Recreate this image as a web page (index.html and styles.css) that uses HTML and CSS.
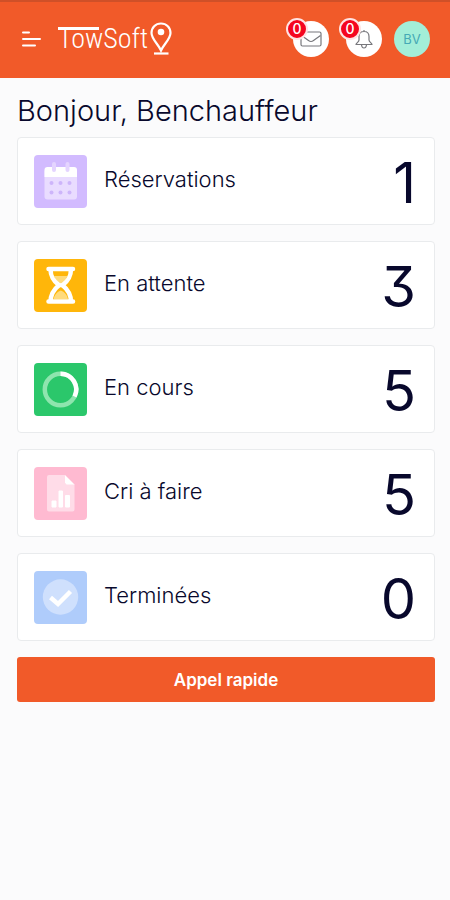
FILE: index.html
```html
<!DOCTYPE html>
<html lang="fr">
<head>
    <meta charset="UTF-8">
    <meta name="viewport" content="width=device-width, initial-scale=1.0">
    <title>TowSoft</title>
    <link rel="stylesheet" href="styles.css">
</head>
<body>
    <header class="header">
        <button class="menu-btn" type="button" aria-label="Menu">
            <svg width="20" height="16" viewBox="0 0 20 16" fill="none" stroke="#fff" stroke-width="2" stroke-linecap="round">
                <path d="M2 1.500H8M2 8H19M2 14.500H14"/>
            </svg>
        </button>
        <a class="logo" href="#">
            <span class="logo-text">TowSoft</span>
            <svg class="logo-pin" width="22" height="34" viewBox="0 0 22 34" fill="none" stroke="#fff" stroke-width="2.200">
                <path d="M11 28.500C8.500 22.500 1.500 17 1.500 11C1.500 5.500 5.500 1.500 11 1.500S20.500 5.500 20.500 11C20.500 17 13.500 22.500 11 28.500Z"/>
                <circle cx="11" cy="10" r="3.300" fill="#fff" stroke="none"/>
                <path d="M4 31.500H18.500"/>
            </svg>
        </a>
        <div class="actions">
            <button class="round-btn" type="button" aria-label="Messages">
                <svg width="22" height="16" viewBox="0 0 22 16" fill="none" stroke="#77777c" stroke-width="1.200" stroke-linejoin="round">
                    <rect x="1" y="1" width="20" height="14" rx="1.500"/>
                    <path d="M1.500 4.500L8.500 9.500Q11 11.500 13.500 9.500L20.500 4.500"/>
                </svg>
                <span class="badge">0</span>
            </button>
            <button class="round-btn" type="button" aria-label="Notifications">
                <svg width="18" height="20" viewBox="0 0 18 20" fill="none" stroke="#77777c" stroke-width="1.200" stroke-linejoin="round">
                    <path d="M9 1V2.500M4 11V7.500C4 4.500 6 2.500 9 2.500S14 4.500 14 7.500V11C14 13 17 14 17 15.500H1C1 14 4 13 4 11Z"/>
                    <path d="M6.500 16Q7 19 9 19T11.500 16"/>
                </svg>
                <span class="badge">0</span>
            </button>
        </div>
        <button class="avatar" type="button">BV</button>
    </header>

    <main class="content">
        <h1 class="greeting">Bonjour, Benchauffeur</h1>

        <div class="cards">
            <a class="card" href="#">
                <svg class="card-icon purple" viewBox="0 0 53 53">
                    <rect x="10.500" y="14" width="32.500" height="30.500" rx="3" fill="#e9dcff"/>
                    <path d="M10.500 22V15Q10.500 12 13.500 12H40Q43 12 43 15V22Z" fill="#fff"/>
                    <path d="M20 9V15M33.500 9V15" stroke="#e4d4ff" stroke-width="4" stroke-linecap="round"/>
                    <g fill="#cdb5fa">
                        <circle cx="17.500" cy="28" r="2"/>
                        <circle cx="26.500" cy="28" r="2"/>
                        <circle cx="35.500" cy="28" r="2"/>
                        <circle cx="17.500" cy="37.500" r="2"/>
                        <circle cx="26.500" cy="37.500" r="2"/>
                        <circle cx="35.500" cy="37.500" r="2"/>
                    </g>
                </svg>
                <span class="card-label">Réservations</span>
                <span class="card-value">1</span>
            </a>
            <a class="card" href="#">
                <svg class="card-icon yellow" viewBox="0 0 53 53">
                    <path d="M20 17H33.500Q31 23 26.800 25.500Q22 23 20 17Z" fill="#ffdb7c"/>
                    <path d="M19.500 40Q21 33.500 26.800 31.500Q32.500 33.500 34 40Z" fill="#ffdb7c"/>
                    <path d="M14.500 10H39M14.500 42.500H39" stroke="#fff" stroke-width="4.500" stroke-linecap="round"/>
                    <path d="M16.500 10C16.500 18 19.500 22 25 26.200C19.500 30.500 16.500 35 16.500 43M37 10C37 18 34 22 28.500 26.200C34 30.500 37 35 37 43" fill="none" stroke="#fff" stroke-width="4.500"/>
                    <path d="M24 26.200H29.500" stroke="#fff" stroke-width="4"/>
                </svg>
                <span class="card-label">En attente</span>
                <span class="card-value">3</span>
            </a>
            <a class="card" href="#">
                <svg class="card-icon green" viewBox="0 0 53 53" fill="none" stroke-width="4.500">
                    <circle cx="26.500" cy="26.500" r="15.700" stroke="#8ee5ae"/>
                    <path d="M26.500 10.800A15.700 15.700 0 0 1 40.500 33.600" stroke="#fff"/>
                </svg>
                <span class="card-label">En cours</span>
                <span class="card-value">5</span>
            </a>
            <a class="card" href="#">
                <svg class="card-icon pink" viewBox="0 0 53 53">
                    <path d="M15 8H31V17H40.500V42.500Q40.500 44.500 38.500 44.500H15Q13 44.500 13 42.500V10Q13 8 15 8Z" fill="#ffdce8"/>
                    <path d="M31 8L40.500 17.500H33Q31 17.500 31 15.500Z" fill="#fff"/>
                    <path d="M18 34H22V40H18ZM25 24H28.500V40H25ZM31.500 28.500H35.500V40H31.500Z" fill="#fff" stroke="#fff" stroke-linejoin="round"/>
                </svg>
                <span class="card-label">Cri à faire</span>
                <span class="card-value">5</span>
            </a>
            <a class="card" href="#">
                <svg class="card-icon blue" viewBox="0 0 53 53">
                    <circle cx="26.500" cy="26" r="17.700" fill="#cfe0fd"/>
                    <path d="M16.500 26.500L24 33L36.500 20.500" fill="none" stroke="#fff" stroke-width="4.500"/>
                </svg>
                <span class="card-label">Terminées</span>
                <span class="card-value">0</span>
            </a>
        </div>

        <button class="call-btn" type="button">Appel rapide</button>
    </main>
</body>
</html>
```
FILE: styles.css
```css
* {
    box-sizing: border-box;
}

body {
    margin: 0;
    background-color: #fbfbfc;
    font-family: Inter, Roboto, sans-serif;
    color: #08082c;
}

button {
    padding: 0;
    border: 0;
    font-family: inherit;
    cursor: pointer;
}

.header {
    display: flex;
    align-items: center;
    height: 78px;
    padding: 0 20px;
    background-color: #f15a29;
    box-shadow: inset 0 2px 0 #cf5028;
}

.menu-btn {
    display: flex;
    margin-right: 16px;
    padding: 0 1px;
    background: none;
}

.logo {
    display: flex;
    align-items: center;
    gap: 2px;
    color: #fff;
    text-decoration: none;
}

.logo-text {
    position: relative;
    font-family: "Liberation Sans Narrow", "Roboto Condensed", Roboto, sans-serif;
    font-size: 28px;
    font-weight: 300;
    line-height: 34px;
}

/* the bar of the T runs over the next letters */
.logo-text::before {
    content: "";
    position: absolute;
    top: 5px;
    left: 0;
    width: 41px;
    height: 3px;
    background-color: #fff;
}

.actions {
    display: flex;
    gap: 17px;
    margin-left: auto;
    margin-right: 12px;
}

.round-btn,
.avatar {
    display: flex;
    justify-content: center;
    align-items: center;
    width: 36px;
    height: 36px;
    border-radius: 50%;
    background-color: #fff;
}

.round-btn {
    position: relative;
}

.badge {
    position: absolute;
    top: -3px;
    left: -7px;
    width: 22px;
    height: 22px;
    border: 2px solid #ffe3e3;
    border-radius: 50%;
    background-color: #f5051f;
    color: #fff;
    font-size: 14px;
    font-weight: 500;
    line-height: 18px;
    text-align: center;
}

.avatar {
    background-color: #a3eed8;
    color: #45a9b5;
    font-size: 13px;
}

.content {
    padding: 15px 15px 16px 17px;
}

.greeting {
    margin: 0 0 8px;
    font-size: 29px;
    font-weight: 300;
    line-height: 36px;
}

.cards {
    display: flex;
    flex-direction: column;
    gap: 16px;
}

.card {
    display: flex;
    align-items: center;
    height: 88px;
    padding: 0 18px 0 16px;
    background-color: #fff;
    border: 1px solid #e9ebed;
    border-radius: 4px;
    color: inherit;
    text-decoration: none;
}

.card-icon {
    width: 53px;
    height: 53px;
    border-radius: 4px;
}

.purple {
    background-color: #d2bbff;
}

.yellow {
    background-color: #ffb60a;
}

.green {
    background-color: #2bc76b;
}

.pink {
    background-color: #ffbad1;
}

.blue {
    background-color: #afccfb;
}

.card-label {
    flex: 1;
    margin-left: 17px;
    padding-bottom: 4px;
    font-size: 22px;
    font-weight: 300;
    line-height: 28px;
}

.card-value {
    padding-top: 4px;
    font-size: 56px;
    font-feature-settings: "cv09";
    line-height: 64px;
}

.call-btn {
    width: 100%;
    height: 45px;
    margin-top: 16px;
    border-radius: 3px;
    background-color: #f15a29;
    color: #fff;
    font-size: 17px;
    font-weight: 600;
}
```
